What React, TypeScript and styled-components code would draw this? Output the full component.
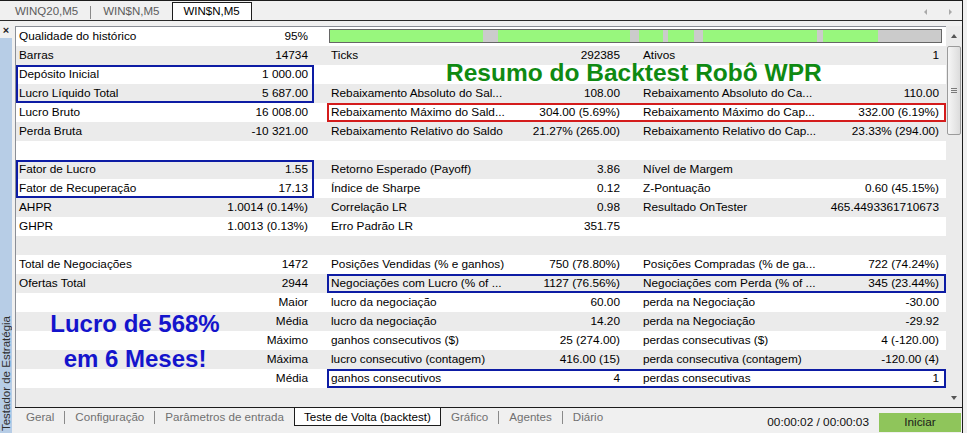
import styled, { createGlobalStyle } from "styled-components";

type Stat = [string, string];
type Frame = "top" | "bottom";

interface IRow {
    a?: Stat;
    b?: Stat;
    c?: Stat;
    aFrame?: Frame;
    pairFrame?: string;
    extra?: "bar" | "title";
    banner?: string;
    bannerLine?: number;
}

const BLUE = "#0d1ca4";
const RED = "#d41c1c";

const rows: IRow[] = [
    { a: ["Qualidade do histórico", "95%"], extra: "bar" },
    { a: ["Barras", "14734"], b: ["Ticks", "292385"], c: ["Ativos", "1"] },
    { a: ["Depósito Inicial", "1 000.00"], aFrame: "top", extra: "title" },
    {
        a: ["Lucro Líquido Total", "5 687.00"],
        aFrame: "bottom",
        b: ["Rebaixamento Absoluto do Sal...", "108.00"],
        c: ["Rebaixamento Absoluto do Ca...", "110.00"],
    },
    {
        a: ["Lucro Bruto", "16 008.00"],
        b: ["Rebaixamento Máximo do Sald...", "304.00 (5.69%)"],
        c: ["Rebaixamento Máximo do Cap...", "332.00 (6.19%)"],
        pairFrame: RED,
    },
    {
        a: ["Perda Bruta", "-10 321.00"],
        b: ["Rebaixamento Relativo do Saldo", "21.27% (265.00)"],
        c: ["Rebaixamento Relativo do Cap...", "23.33% (294.00)"],
    },
    {},
    { a: ["Fator de Lucro", "1.55"], aFrame: "top", b: ["Retorno Esperado (Payoff)", "3.86"], c: ["Nível de Margem", ""] },
    {
        a: ["Fator de Recuperação", "17.13"],
        aFrame: "bottom",
        b: ["Índice de Sharpe", "0.12"],
        c: ["Z-Pontuação", "0.60 (45.15%)"],
    },
    { a: ["AHPR", "1.0014 (0.14%)"], b: ["Correlação LR", "0.98"], c: ["Resultado OnTester", "465.4493361710673"] },
    { a: ["GHPR", "1.0013 (0.13%)"], b: ["Erro Padrão LR", "351.75"] },
    {},
    {
        a: ["Total de Negociações", "1472"],
        b: ["Posições Vendidas (% e ganhos)", "750 (78.80%)"],
        c: ["Posições Compradas (% de ga...", "722 (74.24%)"],
    },
    {
        a: ["Ofertas Total", "2944"],
        b: ["Negociações com Lucro (% of ...", "1127 (76.56%)"],
        c: ["Negociações com Perda (% of ...", "345 (23.44%)"],
        pairFrame: BLUE,
    },
    { a: ["", "Maior"], b: ["lucro da negociação", "60.00"], c: ["perda na Negociação", "-30.00"] },
    {
        a: ["", "Média"],
        b: ["lucro da negociação", "14.20"],
        c: ["perda na Negociação", "-29.92"],
        banner: "Lucro de 568%",
        bannerLine: 23,
    },
    { a: ["", "Máximo"], b: ["ganhos consecutivos ($)", "25 (274.00)"], c: ["perdas consecutivas ($)", "4 (-120.00)"] },
    {
        a: ["", "Máxima"],
        b: ["lucro consecutivo (contagem)", "416.00 (15)"],
        c: ["perda consecutiva (contagem)", "-120.00 (4)"],
        banner: "em 6 Meses!",
        bannerLine: 18,
    },
    { a: ["", "Média"], b: ["ganhos consecutivos", "4"], c: ["perdas consecutivas", "1"], pairFrame: BLUE },
    {},
];

// green / gray pieces of the history quality bar, in px
const quality: [number, boolean][] = [
    [153, true],
    [15, false],
    [132, true],
    [9, false],
    [24, true],
    [5, false],
    [26, true],
    [9, false],
    [114, true],
    [6, false],
    [55, true],
    [63, false],
];

const GlobalStyle = createGlobalStyle`
    html, body {
        margin: 0;
        padding: 0;
        background: #f0f0f0;
    }
    body {
        font-family: "Liberation Sans", Arial, sans-serif;
        font-size: 11.8px;
        color: #000;
    }
`;

const Window = styled.div`
    display: flex;
    flex-direction: column;
    width: 962px;
    height: 432px;
    border-top: 1px solid #1c1c1c;
    border-right: 1px solid #1c1c1c;
    background: #f0f0f0;
    overflow: hidden;
`;

const TabBar = styled.div`
    display: flex;
    height: 19px;
    padding-left: 3px;
    border-bottom: 1px solid #2a2a2a;
`;

const TopTab = styled.div<{ $active?: boolean }>`
    height: 17px;
    margin-top: 1px;
    padding: 0 11px;
    line-height: 17px;
    font-size: 11.5px;
    color: ${(p) => (p.$active ? "#000" : "#5c5c5c")};
    background: ${(p) => (p.$active ? "#fff" : "transparent")};
    border: 1px solid ${(p) => (p.$active ? "#1c1c1c" : "transparent")};
`;

const TabSep = styled.div`
    width: 1px;
    height: 13px;
    margin-top: 5px;
    background: #8a8a8a;
`;

const TabArrows = styled.div`
    display: flex;
    align-items: center;
    gap: 22px;
    margin-left: auto;
    padding: 2px 10px 0 0;
`;

const Arrow = styled.div<{ $dir: "left" | "right" | "up" | "down"; $color: string }>`
    width: 0;
    height: 0;
    border: 3px solid transparent;
    ${(p) => (p.$dir === "left" ? `border-right: 3px solid ${p.$color}; border-left-width: 0;` : "")}
    ${(p) => (p.$dir === "right" ? `border-left: 3px solid ${p.$color}; border-right-width: 0;` : "")}
    ${(p) => (p.$dir === "up" ? `border-bottom: 4px solid ${p.$color}; border-top-width: 0;` : "")}
    ${(p) => (p.$dir === "down" ? `border-top: 4px solid ${p.$color}; border-bottom-width: 0;` : "")}
`;

const Body = styled.div`
    display: flex;
    flex: 1;
`;

const Side = styled.div`
    display: flex;
    flex-direction: column;
    width: 12px;
`;

const Close = styled.div`
    height: 17px;
    line-height: 18px;
    text-align: center;
    font-size: 11px;
    font-weight: bold;
    color: #222;
`;

const SideBar = styled.div`
    display: flex;
    flex: 1;
    flex-direction: column;
    justify-content: flex-end;
    align-items: center;
    padding-bottom: 2px;
    background: #b7cde6;
`;

const SideLabel = styled.div`
    writing-mode: vertical-rl;
    transform: rotate(180deg);
    font-size: 11.5px;
    color: #2e2e2e;
    white-space: nowrap;
`;

const Main = styled.div`
    display: flex;
    flex: 1;
    flex-direction: column;
    margin-left: 3px;
    padding-top: 5px;
`;

const Grid = styled.div`
    display: flex;
    height: 381px;
`;

const Table = styled.div`
    width: 930px;
    border-top: 1px solid #8a8e96;
    border-left: 1px solid #8a8e96;
    background: #fff;
`;

const Row = styled.div`
    display: flex;
    height: 19px;
    line-height: 19px;
    white-space: pre;

    &:nth-child(even) {
        background: #ebebeb;
    }
`;

const Cell = styled.div<{ $w: number; $pl: number; $pr: number; $frame?: Frame }>`
    box-sizing: border-box;
    display: flex;
    justify-content: space-between;
    width: ${(p) => p.$w}px;
    padding: 0 ${(p) => p.$pr}px 0 ${(p) => p.$pl}px;
    box-shadow: ${(p) =>
        p.$frame === "top"
            ? `inset 2px 0 0 ${BLUE}, inset -2px 0 0 ${BLUE}, inset 0 2px 0 ${BLUE}`
            : p.$frame === "bottom"
            ? `inset 2px 0 0 ${BLUE}, inset -2px 0 0 ${BLUE}, inset 0 -2px 0 ${BLUE}`
            : "none"};
`;

const Gap = styled.div<{ $w: number }>`
    width: ${(p) => p.$w}px;
`;

const PairBox = styled.div<{ $frame?: string }>`
    display: flex;
    width: 619px;
    box-shadow: ${(p) => (p.$frame ? `inset 0 0 0 2px ${p.$frame}` : "none")};
`;

const Bar = styled.div`
    display: flex;
    align-self: flex-start;
    width: 611px;
    height: 12px;
    margin: 2px 0 0 2px;
    border: 1px solid #666;
    background: #c9c9c9;
`;

const Segment = styled.div<{ $w: number; $on: boolean }>`
    width: ${(p) => p.$w}px;
    background: ${(p) => (p.$on ? "#98f77d" : "#cbcbcb")};
`;

const Title = styled.div`
    padding-left: 119px;
    font: bold 24.5px/16px "Liberation Sans", Arial, sans-serif;
    color: #0f8a12;
`;

const Banner = styled.span<{ $line: number }>`
    width: 232px;
    text-align: center;
    font: bold 24px / ${(p) => p.$line}px "Liberation Sans", Arial, sans-serif;
    color: #1414cc;
`;

const ScrollBar = styled.div`
    display: flex;
    flex-direction: column;
    width: 16px;
    background: #ebebeb;
`;

const ScrollBtn = styled.div`
    display: flex;
    justify-content: center;
    align-items: center;
    height: 19px;
`;

const Thumb = styled.div`
    display: flex;
    justify-content: center;
    align-items: center;
    height: 87px;
    margin: 1px 1px 0;
    border: 1px solid #9b9b9b;
    border-radius: 2px;
    background: linear-gradient(to right, #f6f6f6, #dcdcdc);
`;

const Grip = styled.div`
    width: 6px;
    height: 5px;
    background: linear-gradient(#7a7a7a 0 1px, transparent 1px 2px, #7a7a7a 2px 3px, transparent 3px 4px, #7a7a7a 4px 5px);
`;

const Track = styled.div`
    flex: 1;
`;

const BottomBar = styled.div`
    display: flex;
    height: 25px;
    padding-left: 1px;
    border-top: 1px solid #1c1c1c;
`;

const BottomTab = styled.div<{ $active?: boolean }>`
    height: 17px;
    padding: 0 9px;
    line-height: 17px;
    font-size: 11.6px;
    color: ${(p) => (p.$active ? "#000" : "#707070")};
    background: ${(p) => (p.$active ? "#fff" : "transparent")};
    border: 1px solid ${(p) => (p.$active ? "#1c1c1c" : "transparent")};
    border-top: none;
`;

const BottomSep = styled.div`
    width: 1px;
    height: 13px;
    margin-top: 3px;
    background: #8a8a8a;
`;

const Timer = styled.div`
    margin: 5px 10px 0 auto;
    line-height: 19px;
    color: #111;
`;

const StartButton = styled.div`
    width: 82px;
    height: 19px;
    margin: 5px 1px 0 0;
    line-height: 19px;
    text-align: center;
    background: #8fc55b;
    color: #1a1a1a;
`;

function StatRow({ row }: { row: IRow }) {
    const [aLabel, aValue] = row.a ?? ["", ""];
    return (
        <Row>
            <Cell $w={298} $pl={3} $pr={6} $frame={row.aFrame}>
                {row.banner ? <Banner $line={row.bannerLine ?? 19}>{row.banner}</Banner> : <span>{aLabel}</span>}
                <span>{aValue}</span>
            </Cell>
            <Gap $w={13} />
            <PairBox $frame={row.pairFrame}>
                {row.extra === "bar" && (
                    <Bar>
                        {quality.map(([w, on], i) => (
                            <Segment key={i} $w={w} $on={on} />
                        ))}
                    </Bar>
                )}
                {row.extra === "title" && <Title>Resumo do Backtest Robô WPR</Title>}
                {!row.extra && (
                    <>
                        <Cell $w={300} $pl={4} $pr={7}>
                            <span>{row.b?.[0]}</span>
                            <span>{row.b?.[1]}</span>
                        </Cell>
                        <Gap $w={12} />
                        <Cell $w={307} $pl={4} $pr={7}>
                            <span>{row.c?.[0]}</span>
                            <span>{row.c?.[1]}</span>
                        </Cell>
                    </>
                )}
            </PairBox>
        </Row>
    );
}

export default function App() {
    return (
        <>
            <GlobalStyle />
            <Window>
                <TabBar>
                    <TopTab>WINQ20,M5</TopTab>
                    <TabSep />
                    <TopTab>WIN$N,M5</TopTab>
                    <TopTab $active>WIN$N,M5</TopTab>
                    <TabArrows>
                        <Arrow $dir="left" $color="#a9a9a9" />
                        <Arrow $dir="right" $color="#a9a9a9" />
                    </TabArrows>
                </TabBar>
                <Body>
                    <Side>
                        <Close>×</Close>
                        <SideBar>
                            <SideLabel>Testador de Estratégia</SideLabel>
                        </SideBar>
                    </Side>
                    <Main>
                        <Grid>
                            <Table>
                                {rows.map((row, i) => (
                                    <StatRow key={i} row={row} />
                                ))}
                            </Table>
                            <ScrollBar>
                                <ScrollBtn>
                                    <Arrow $dir="up" $color="#555" />
                                </ScrollBtn>
                                <Thumb>
                                    <Grip />
                                </Thumb>
                                <Track />
                                <ScrollBtn>
                                    <Arrow $dir="down" $color="#555" />
                                </ScrollBtn>
                            </ScrollBar>
                        </Grid>
                        <BottomBar>
                            <BottomTab>Geral</BottomTab>
                            <BottomSep />
                            <BottomTab>Configuração</BottomTab>
                            <BottomSep />
                            <BottomTab>Parâmetros de entrada</BottomTab>
                            <BottomTab $active>Teste de Volta (backtest)</BottomTab>
                            <BottomTab>Gráfico</BottomTab>
                            <BottomSep />
                            <BottomTab>Agentes</BottomTab>
                            <BottomSep />
                            <BottomTab>Diário</BottomTab>
                            <Timer>00:00:02 / 00:00:03</Timer>
                            <StartButton>Iniciar</StartButton>
                        </BottomBar>
                    </Main>
                </Body>
            </Window>
        </>
    );
}
